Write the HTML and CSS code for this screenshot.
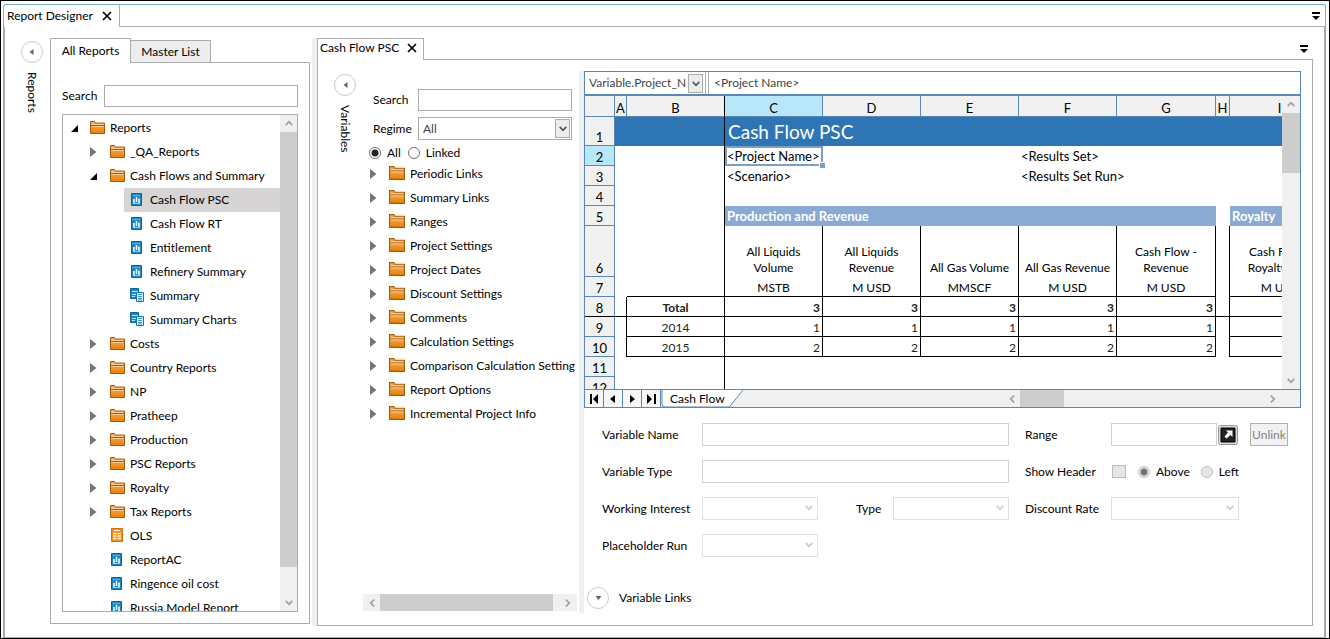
FILE: index.html
```html
<!DOCTYPE html>
<html lang="en">
<head>
<meta charset="utf-8">
<title>Report Designer</title>
<meta name="viewport" content="width=device-width, initial-scale=1">
<link rel="stylesheet" href="styles.css">
</head>
<body>
<svg class="defs" aria-hidden="true">
  <defs>
    <linearGradient id="gold" x1="0" y1="0" x2="0" y2="1"><stop offset="0" stop-color="#f9b764"/><stop offset="1" stop-color="#e87d08"/></linearGradient>
    <symbol id="folder" viewBox="0 0 15 13"><path d="M.5 12.500V.5h4l1 1.500h9v10.500z" fill="url(#gold)" stroke="#a65a08"/><path d="M1 4.500h13" stroke="#a65a08"/><path d="M1.500 3.500h12M1.500 5.500h12" stroke="#fcd096"/></symbol>
    <symbol id="report" viewBox="0 0 12 13"><path d="M.5.5h10v12H.5z" fill="#1a86c4" stroke="#0c6399"/><path d="M2 2.500h7" stroke="#62b4e0"/><path d="M3 6v4M5.500 4v5M8 5.500V10" stroke="#fff" stroke-width="1.500"/><path d="M2 10.500h7" stroke="#8fcdf0"/></symbol>
    <symbol id="multi" viewBox="0 0 14 14"><path d="M.5.5h8v10h-8z" fill="#1a86c4" stroke="#0c6399"/><path d="M2 3.500h6M2 6.500h4M2 8.500h3" stroke="#bfe3f7"/><path d="M6.500 4.500h7v9h-7z" fill="#e6f5fd" stroke="#0c74b4"/><path d="M8 6.500h4M8 8.500h4M8 10.500h4M8 12h4" stroke="#2a93d0"/></symbol>
    <symbol id="grid" viewBox="0 0 12 14"><path d="M.5.500h11v13H.5z" fill="#f08c18" stroke="#d86f04"/><path d="M3 2.500h6" stroke="#fff"/><path d="M2 5.500h3.500M6.500 5.500H10M2 8h3.500M6.500 8H10M2 10.500h3.500M6.500 10.500H10" stroke="#fff3dc" stroke-width="1.500"/></symbol>
    <symbol id="closed" viewBox="0 0 7 10"><path d="M0 0l6.500 5L0 10z" fill="#757575"/></symbol>
    <symbol id="open" viewBox="0 0 7 7"><path d="M7 0v7H0z" fill="#000"/></symbol>
    <symbol id="chev" viewBox="0 0 8 6"><path d="M.7.800L4 4.300 7.300.800" fill="none" stroke="currentColor" stroke-width="1.700"/></symbol>
    <symbol id="cross" viewBox="0 0 10 10"><path d="M1 1l8 8M9 1L1 9" stroke="#000" stroke-width="1.700"/></symbol>
    <symbol id="menu" viewBox="0 0 8 8"><path d="M0 0h8v2H0zM0 4h8L4 8z"/></symbol>
    <symbol id="tri" viewBox="0 0 5 6"><path d="M4.500 0v6L.5 3z" fill="#666"/></symbol>
  </defs>
</svg>
<div class="window">
  <header class="strip">
    <div class="tab"><span>Report Designer</span><button class="plain" aria-label="Close Report Designer"><svg class="i10"><use href="#cross"/></svg></button></div>
    <div class="rest"><button class="plain" aria-label="Window list"><svg class="i8"><use href="#menu"/></svg></button></div>
  </header>
  <div class="workspace">
    <aside class="rail">
      <button class="round" aria-label="Collapse reports"><svg class="tri"><use href="#tri"/></svg></button>
      <span class="vertical">Reports</span>
    </aside>
    <section class="reports">
      <nav class="tabs">
        <button class="page-tab active">All Reports</button><button class="page-tab">Master List</button><span class="tabline"></span>
      </nav>
      <div class="reports-body">
        <div class="search"><label for="rs">Search</label><input id="rs" class="box" type="text"></div>
        <div class="treebox">
          <ul class="tree">
            <li class="row"><svg class="open"><use href="#open"/></svg><svg class="folder"><use href="#folder"/></svg>Reports</li>
            <li class="row l1"><svg class="closed"><use href="#closed"/></svg><svg class="folder"><use href="#folder"/></svg>_QA_Reports</li>
            <li class="row l1"><svg class="open"><use href="#open"/></svg><svg class="folder"><use href="#folder"/></svg>Cash Flows and Summary</li>
            <li class="row leaf2 selected"><svg class="report"><use href="#report"/></svg>Cash Flow PSC</li>
            <li class="row leaf2"><svg class="report"><use href="#report"/></svg>Cash Flow RT</li>
            <li class="row leaf2"><svg class="report"><use href="#report"/></svg>Entitlement</li>
            <li class="row leaf2"><svg class="report"><use href="#report"/></svg>Refinery Summary</li>
            <li class="row leaf2"><svg class="multi"><use href="#multi"/></svg>Summary</li>
            <li class="row leaf2"><svg class="multi"><use href="#multi"/></svg>Summary Charts</li>
            <li class="row l1"><svg class="closed"><use href="#closed"/></svg><svg class="folder"><use href="#folder"/></svg>Costs</li>
            <li class="row l1"><svg class="closed"><use href="#closed"/></svg><svg class="folder"><use href="#folder"/></svg>Country Reports</li>
            <li class="row l1"><svg class="closed"><use href="#closed"/></svg><svg class="folder"><use href="#folder"/></svg>NP</li>
            <li class="row l1"><svg class="closed"><use href="#closed"/></svg><svg class="folder"><use href="#folder"/></svg>Pratheep</li>
            <li class="row l1"><svg class="closed"><use href="#closed"/></svg><svg class="folder"><use href="#folder"/></svg>Production</li>
            <li class="row l1"><svg class="closed"><use href="#closed"/></svg><svg class="folder"><use href="#folder"/></svg>PSC Reports</li>
            <li class="row l1"><svg class="closed"><use href="#closed"/></svg><svg class="folder"><use href="#folder"/></svg>Royalty</li>
            <li class="row l1"><svg class="closed"><use href="#closed"/></svg><svg class="folder"><use href="#folder"/></svg>Tax Reports</li>
            <li class="row leaf1"><svg class="gridicon"><use href="#grid"/></svg>OLS</li>
            <li class="row leaf1"><svg class="report"><use href="#report"/></svg>ReportAC</li>
            <li class="row leaf1"><svg class="report"><use href="#report"/></svg>Ringence oil cost</li>
            <li class="row leaf1"><svg class="report"><use href="#report"/></svg>Russia Model Report</li>
          </ul>
          <div class="vbar"><svg class="chev up"><use href="#chev"/></svg><div class="track"><div class="thumb tall"></div></div><svg class="chev"><use href="#chev"/></svg></div>
        </div>
      </div>
    </section>
    <div class="splitter"></div>
    <main class="document">
      <header class="strip doc">
        <div class="tab"><span>Cash Flow PSC</span><button class="plain" aria-label="Close Cash Flow PSC"><svg class="i10"><use href="#cross"/></svg></button></div>
        <div class="rest"><button class="plain" aria-label="Document list"><svg class="i8"><use href="#menu"/></svg></button></div>
      </header>
      <div class="doc-body">
        <aside class="rail inner">
          <button class="round" aria-label="Collapse variables"><svg class="tri"><use href="#tri"/></svg></button>
          <span class="vertical">Variables</span>
        </aside>
        <section class="variables">
          <div class="filter">
            <label for="vs">Search</label><input id="vs" class="box" type="text">
            <label for="rg">Regime</label>
            <span class="combo"><select id="rg" class="box"><option>All</option></select><span class="drop"><svg class="chev"><use href="#chev"/></svg></span></span>
          </div>
          <div class="radios">
            <input type="radio" name="scope" id="all" checked><label for="all">All</label>
            <input type="radio" name="scope" id="linked"><label for="linked">Linked</label>
          </div>
          <ul class="tree vars">
            <li class="row"><svg class="closed"><use href="#closed"/></svg><svg class="folder"><use href="#folder"/></svg>Periodic Links</li>
            <li class="row"><svg class="closed"><use href="#closed"/></svg><svg class="folder"><use href="#folder"/></svg>Summary Links</li>
            <li class="row"><svg class="closed"><use href="#closed"/></svg><svg class="folder"><use href="#folder"/></svg>Ranges</li>
            <li class="row"><svg class="closed"><use href="#closed"/></svg><svg class="folder"><use href="#folder"/></svg>Project Settings</li>
            <li class="row"><svg class="closed"><use href="#closed"/></svg><svg class="folder"><use href="#folder"/></svg>Project Dates</li>
            <li class="row"><svg class="closed"><use href="#closed"/></svg><svg class="folder"><use href="#folder"/></svg>Discount Settings</li>
            <li class="row"><svg class="closed"><use href="#closed"/></svg><svg class="folder"><use href="#folder"/></svg>Comments</li>
            <li class="row"><svg class="closed"><use href="#closed"/></svg><svg class="folder"><use href="#folder"/></svg>Calculation Settings</li>
            <li class="row"><svg class="closed"><use href="#closed"/></svg><svg class="folder"><use href="#folder"/></svg>Comparison Calculation Setting</li>
            <li class="row"><svg class="closed"><use href="#closed"/></svg><svg class="folder"><use href="#folder"/></svg>Report Options</li>
            <li class="row"><svg class="closed"><use href="#closed"/></svg><svg class="folder"><use href="#folder"/></svg>Incremental Project Info</li>
          </ul>
          <div class="hbar"><svg class="chev left"><use href="#chev"/></svg><div class="track"><div class="thumb"></div></div><svg class="chev right"><use href="#chev"/></svg></div>
        </section>
        <div class="splitter"></div>
        <section class="editor">
          <div class="sheet">
            <div class="formula">
              <span class="combo namebox"><select aria-label="Name box"><option>Variable.Project_N</option></select><span class="drop"><svg class="chev"><use href="#chev"/></svg></span></span>
              <input class="fx" type="text" aria-label="Formula" value="&lt;Project Name&gt;">
            </div>
            <div class="grid-area">
              <div class="cells">
                <table>
                  <colgroup><col class="c-head"><col class="c-a"><col class="c-n"><col class="c-n"><col class="c-n"><col class="c-n"><col class="c-n"><col class="c-g"><col class="c-h"><col class="c-i"></colgroup>
                  <thead><tr class="r20"><th></th><th>A</th><th class="frz">B</th><th class="on">C</th><th>D</th><th>E</th><th>F</th><th>G</th><th>H</th><th>I</th></tr></thead>
                  <tbody>
                    <tr class="r1 banner"><th>1</th><td></td><td class="frz"></td><td class="title" colspan="7">Cash Flow PSC</td></tr>
                    <tr class="r20"><th class="on">2</th><td></td><td class="frz"></td><td class="picked">&lt;Project Name&gt;<i class="sel"></i></td><td></td><td></td><td colspan="4">&lt;Results Set&gt;</td></tr>
                    <tr class="r20"><th>3</th><td></td><td class="frz"></td><td>&lt;Scenario&gt;</td><td></td><td></td><td colspan="4">&lt;Results Set Run&gt;</td></tr>
                    <tr class="r20"><th>4</th><td></td><td class="frz"></td><td colspan="7"></td></tr>
                    <tr class="r20"><th>5</th><td></td><td class="frz"></td><td class="group" colspan="5">Production and Revenue</td><td></td><td class="group">Royalty</td></tr>
                    <tr class="r6 names"><th>6</th><td></td><td class="frz"></td><td class="v">All Liquids<br>Volume</td><td class="v">All Liquids<br>Revenue</td><td class="v">All Gas Volume</td><td class="v">All Gas Revenue</td><td class="v">Cash Flow -<br>Revenue</td><td class="v"></td><td>Cash Flow -<br>Royalty Paid</td></tr>
                    <tr class="r20 names"><th>7</th><td></td><td class="frz u"></td><td class="v u">MSTB</td><td class="v u">M USD</td><td class="v u">MMSCF</td><td class="v u">M USD</td><td class="v u">M USD</td><td class="v"></td><td class="u">M USD</td></tr>
                    <tr class="r20 nums total cut"><th>8</th><td class="v u"></td><td class="frz u">Total</td><td class="v u">3</td><td class="v u">3</td><td class="v u">3</td><td class="v u">3</td><td class="v u">3</td><td class="v u"></td><td class="u"></td></tr>
                    <tr class="r20 nums"><th>9</th><td class="v"></td><td class="frz u">2014</td><td class="v u">1</td><td class="v u">1</td><td class="v u">1</td><td class="v u">1</td><td class="v u">1</td><td class="v"></td><td class="u"></td></tr>
                    <tr class="r20 nums"><th>10</th><td class="v"></td><td class="frz u">2015</td><td class="v u">2</td><td class="v u">2</td><td class="v u">2</td><td class="v u">2</td><td class="v u">2</td><td class="v"></td><td class="u"></td></tr>
                    <tr class="r20"><th>11</th><td></td><td class="frz"></td><td colspan="7"></td></tr>
                    <tr class="r20"><th>12</th><td></td><td class="frz"></td><td colspan="7"></td></tr>
                  </tbody>
                </table>
              </div>
              <div class="vbar wide"><svg class="chev up"><use href="#chev"/></svg><div class="track"><div class="thumb short"></div></div><svg class="chev"><use href="#chev"/></svg></div>
            </div>
            <div class="sheetbar">
              <button aria-label="First sheet"><svg viewBox="0 0 10 10"><path d="M1 0h2v10H1zM9 0v10L4 5z"/></svg></button>
              <button aria-label="Previous sheet"><svg viewBox="0 0 10 10"><path d="M7 1v8L2 5z"/></svg></button>
              <button aria-label="Next sheet"><svg viewBox="0 0 10 10"><path d="M3 1v8l5-4z"/></svg></button>
              <button aria-label="Last sheet"><svg viewBox="0 0 10 10"><path d="M8 0h2v10H8zM1 0v10l5-5z"/></svg></button>
              <button class="sheettab"><svg class="shape" viewBox="0 0 84 18"><path d="M1 0v14q0 3 3 3h63q2 0 3-2L82 0" fill="#fff" stroke="#5b87b5"/></svg><span>Cash Flow</span></button>
              <div class="hbar"><svg class="chev left"><use href="#chev"/></svg><div class="track"><div class="thumb small"></div></div><svg class="chev right"><use href="#chev"/></svg></div>
            </div>
          </div>
          <form class="form">
            <label for="vn">Variable Name</label><input id="vn" class="dim span3" type="text" disabled>
            <label class="far" for="ra">Range</label>
            <div class="range"><input id="ra" class="dim" type="text" disabled><button type="button" class="plain" aria-label="Pick range"><svg class="pick" viewBox="0 0 20 20"><rect x=".5" y=".5" width="19" height="19" rx="2" fill="#ddd" stroke="#999"/><path d="M3 3h14v14H3z" fill="#222" stroke="#000"/><path d="M8 5.500h6.500V12l-2-2-4 3.500-2-2 3.500-4z" fill="#fff"/></svg></button><button type="button" class="unlink" disabled>Unlink</button></div>
            <label for="vt">Variable Type</label><input id="vt" class="dim span3" type="text" disabled>
            <label class="far" for="sh">Show Header</label>
            <div class="header-opts"><input type="checkbox" id="sh" disabled><input type="radio" name="pos" id="ab" checked disabled><label for="ab">Above</label><input type="radio" name="pos" id="le" disabled><label for="le">Left</label></div>
            <label for="wi">Working Interest</label><span class="combo"><select id="wi" class="dim" disabled></select><svg class="chev"><use href="#chev"/></svg></span>
            <label class="type" for="ty">Type</label><span class="combo"><select id="ty" class="dim" disabled></select><svg class="chev"><use href="#chev"/></svg></span>
            <label class="far" for="dr">Discount Rate</label><span class="combo rate"><select id="dr" class="dim" disabled></select><svg class="chev"><use href="#chev"/></svg></span>
            <label for="pr">Placeholder Run</label><span class="combo"><select id="pr" class="dim" disabled></select><svg class="chev"><use href="#chev"/></svg></span>
          </form>
          <div class="links"><button class="round" id="vl" aria-label="Expand variable links"><svg class="tri down"><use href="#tri"/></svg></button><span>Variable Links</span></div>
        </section>
      </div>
    </main>
  </div>
</div>
</body>
</html>
```
FILE: styles.css
```css
* { box-sizing: border-box; }
body {
  margin: 0;
  height: 100vh;
  padding: 3px 3px 0 2px;
  border: 1px solid #000;
  background: #fff;
  color: #000;
  font: 12px/16px Lato, "Open Sans", sans-serif;
  overflow: hidden;
}
button, input, select { font: inherit; color: inherit; margin: 0; padding: 0; border-radius: 0; }
svg { display: block; flex: none; }
label, span { white-space: nowrap; }
.defs { position: absolute; width: 0; height: 0; }
.i10 { width: 10px; height: 10px; }
.i8 { width: 8px; height: 8px; }
.plain { border: 0; background: none; }

.window {
  height: 100%;
  display: flex;
  flex-direction: column;
  border: 1px solid #7fb0c8;
  border-bottom-color: #aaa;
  border-radius: 3px 3px 0 0;
}
.strip { display: flex; flex: none; height: 22px; }
.tab {
  display: flex;
  align-items: center;
  gap: 9px;
  padding: 0 7px 1px 3px;
  border: 1px solid #acacac;
  border-width: 0 1px 0 0;
}
.rest {
  flex: 1;
  display: flex;
  justify-content: flex-end;
  align-items: center;
  padding-right: 5px;
  border-bottom: 1px solid #acacac;
}
.workspace { flex: 1; min-height: 0; display: flex; padding: 11px 11px 11px 0; border-right: 1px solid #acacac; border-left: 1px solid #acacac; }

.rail { width: 45px; flex: none; display: flex; flex-direction: column; align-items: center; gap: 9px; padding: 3px 0 0 8px; }
.rail.inner { padding: 13px 0 0 9px; }
.round {
  width: 22px;
  height: 22px;
  flex: none;
  display: flex;
  align-items: center;
  justify-content: center;
  border: 1px solid #ccc;
  border-radius: 50%;
  background: #fff;
}
.tri { width: 5px; height: 6px; }
.tri.down { transform: rotate(-90deg); }
.vertical { writing-mode: vertical-rl; }

.reports { width: 260px; flex: none; display: flex; flex-direction: column; margin-bottom: 2px; }
.tabs { display: flex; align-items: flex-end; height: 25px; }
.page-tab { width: 80px; height: 23px; border: 1px solid #acacac; border-left: 0; background: #ededed; }
.page-tab.active { width: 81px; height: 25px; border-left: 1px solid #acacac; border-bottom: 0; background: #fff; }
.tabline { flex: 1; border-bottom: 1px solid #acacac; }
.reports-body { flex: 1; min-height: 0; display: flex; flex-direction: column; gap: 7px; padding: 22px 11px 11px; border: 1px solid #acacac; border-top: 0; }
.search { display: flex; align-items: center; gap: 7px; }
.search label { flex: none; width: 35px; }
.search .box { flex: 1; }
.box { width: 100%; min-width: 0; height: 22px; border: 1px solid #acacac; background: #fff; }
.treebox { flex: 1; min-height: 0; display: flex; border: 1px solid #acacac; }
.tree { flex: 1; min-width: 0; margin: 0; padding: 0; list-style: none; overflow: hidden; }
.row { display: flex; align-items: center; height: 24px; padding-left: 8px; white-space: nowrap; }
.l1 { padding-left: 27px; }
.leaf1 { padding-left: 47px; }
.treebox .tree { padding-top: 1px; }
.selected { background: linear-gradient(90deg, #fff 61px, #d6d4d5 61px); }
.leaf2 { padding-left: 67px; }
.open { width: 7px; height: 7px; margin-right: 12px; }
.l1 .closed, .l1 .open { margin-right: 13px; }
.closed { width: 7px; height: 10px; margin-right: 13px; }
.folder { width: 15px; height: 13px; margin: 0 5px 2px 0; }
.report { width: 12px; height: 13px; margin: 0 7px 2px 1px; }
.multi { width: 14px; height: 14px; margin: 0 6px 2px 0; }
.gridicon { width: 12px; height: 14px; margin: 0 7px 2px 1px; }

.vbar, .hbar { display: flex; flex: none; align-items: center; background: #f0f0f0; color: #a0a0a0; }
.vbar { width: 17px; flex-direction: column; padding: 5px 0; }
.vbar.wide { width: 18px; }
.track { flex: 1; display: flex; }
.vbar .track { flex-direction: column; width: 100%; margin: 6px 0 5px; }
.thumb { background: #cdcdcd; }
.tall { height: 94%; }
.short { height: 60px; }
.hbar { height: 17px; padding: 0 5px; }
.hbar .track { align-self: stretch; margin: 0 4px; }
.hbar .thumb { width: 96%; }
.hbar .small { width: 44px; }
.chev { width: 8px; height: 6px; }
.up { transform: rotate(180deg); }
.left { transform: rotate(90deg); }
.right { transform: rotate(-90deg); }
.splitter { width: 5px; flex: none; background: #f0f0f0; }
.reports + .splitter { margin-left: 2px; }

.document { flex: 1; min-width: 0; display: flex; flex-direction: column; }
.doc .tab { gap: 8px; border-width: 1px 1px 0; padding: 0 6px 3px 2px; }
.doc-body { flex: 1; min-height: 0; display: flex; padding: 11px 11px 12px 0; border: 1px solid #acacac; border-top: 0; }
.doc-body .rail { padding-top: 3px; }
.variables { width: 214px; flex: none; display: flex; flex-direction: column; padding-bottom: 2px; }
.doc-body > .splitter { margin-left: 2px; }
.filter { display: grid; grid-template-columns: 45px 1fr; gap: 6px 0; align-items: center; padding: 18px 5px 0 10px; }
.combo { position: relative; display: block; min-width: 0; }
.combo select { display: block; width: 100%; height: 23px; appearance: none; background: #fff; }
.combo > .chev { position: absolute; right: 5px; top: 8px; color: #ccc; }
.combo .box { padding-left: 4px; color: #444; }
.drop {
  position: absolute;
  right: 2px;
  top: 2px;
  width: 15px;
  height: 19px;
  display: flex;
  align-items: center;
  justify-content: center;
  border: 1px solid #acacac;
  background: #ececec;
  color: #555;
  pointer-events: none;
}
.radios { display: flex; align-items: center; height: 22px; padding: 3px 0 0 6px; }
input[type="radio"] { appearance: none; flex: none; width: 12px; height: 12px; margin-right: 6px; border: 1px solid #707070; border-radius: 50%; background: #fff; }
input[type="radio"]:checked { background: radial-gradient(circle, #222 3px, #fff 4px); }
input[type="radio"]:disabled { border-color: #c0c0c0; background: #e6e6e6; }
input[type="radio"]:checked:disabled { background: radial-gradient(circle, #707070 3px, #e6e6e6 4px); }
.radios label + input { margin-left: 7px; }
.vars .row { padding-left: 7px; }
.vars .closed { margin-right: 12px; }
.vars .folder { width: 16px; height: 14px; }

.editor { flex: 1; min-width: 0; display: flex; flex-direction: column; }
.sheet { flex: 1; min-height: 0; display: flex; flex-direction: column; border: 1px solid #5b87b5; }
.formula { display: flex; flex: none; height: 24px; border-bottom: 2px solid #5b87b5; color: #444; }
.namebox { width: 121px; border-right: 1px solid #acacac; }
.namebox select { height: 22px; padding-left: 4px; border: 0; }
.fx { flex: 1; min-width: 0; margin-left: 2px; padding-left: 5px; border: 0; border-left: 1px solid #acacac; background: #fff; }
.grid-area { flex: 1; min-height: 0; display: flex; }
.cells { flex: 1; min-width: 0; overflow: hidden; font: 13px/16px Lato, sans-serif; }
table { table-layout: fixed; width: 745px; border-collapse: separate; border-spacing: 0; }
.c-head { width: 30px; }
.c-a { width: 12px; }
.c-n { width: 98px; }
.c-g { width: 99px; }
.c-h { width: 14px; }
.c-i { width: 100px; }
th, td { padding: 0 2px; vertical-align: bottom; white-space: nowrap; }
tbody td { padding-bottom: 2px; }
th { padding: 0; border: 1px solid #5b87b5; border-width: 0 1px 1px 0; background: #f1f1f1; font-weight: 400; }
th.on { background: #b8e7fa; }
.r20 { height: 20px; }
thead .r20 { height: 21px; }
thead th { vertical-align: bottom; }
.r1 { height: 29px; }
.r6 { height: 51px; }
th.frz, td.frz { border-right: 1px solid #000; }
.banner td { background: #2e75b6; }
.banner .title { padding: 0 3px 2px; color: #fff; font-size: 19px; line-height: 24px; }
.picked { position: relative; }
.sel { position: absolute; inset: 0; border: 2px solid #7f9fc0; }
.sel::after { content: ""; position: absolute; right: -4px; bottom: -4px; width: 5px; height: 5px; background: #7f9fc0; border: 1px solid #fff; border-width: 1px 0 0 1px; }
.group { background: #8aa9d3; color: #fff; font-weight: 700; }
.v { border-right: 1px solid #000; }
.u, .cut th { border-bottom: 1px solid #000; }
.names td { padding-bottom: 1px; text-align: center; font-size: 12px; }
.names .u, .nums td { padding-bottom: 0; }
.nums td { text-align: right; font-size: 12px; color: #222; }
.nums .frz { text-align: center; }
.total td { font-weight: 700; }
.sheetbar { display: flex; flex: none; height: 18px; border-top: 1px solid #5b87b5; background: #f1f1f1; }
.sheetbar button { width: 19px; padding: 0 4px; border: 0; border-right: 1px solid #5b87b5; background: #f7f7f7; }
.sheetbar button svg { width: 10px; height: 10px; }
.sheetbar .sheettab { position: relative; width: 84px; padding: 0; border: 0; background: none; text-align: left; }
.sheetbar .sheettab .shape { position: absolute; inset: 0; width: 84px; height: 18px; }
.sheettab span { position: relative; padding-left: 9px; }
.sheetbar .hbar { width: 279px; margin: 0 18px 0 auto; }

.form { flex: none; display: grid; grid-template-columns: 100px 116px 75px minmax(116px, 1fr) 102px 190px; grid-auto-rows: 23px; row-gap: 14px; align-items: center; padding: 15px 0 0 18px; }
.span3 { grid-column: span 3; }
.far { padding-left: 16px; }
.type { padding-left: 38px; }
.dim { height: 23px; min-width: 0; border: 1px solid #d2d2d2; background: #fff; }
.rate { width: 128px; }
.range { display: flex; align-items: center; }
.range .dim { width: 106px; margin-right: 1px; }
.pick { width: 20px; height: 20px; }
.unlink { width: 38px; height: 23px; margin-left: 12px; border: 1px solid #b0b0b0; background: #f2f2f2; color: #838383; }
.header-opts { display: flex; align-items: center; }
input[type="checkbox"] { appearance: none; width: 14px; height: 13px; margin: 0 12px 0 1px; border: 1px solid #bcbcbc; background: #e6e6e6; }
.header-opts label { margin-right: 11px; }
.links { display: flex; align-items: center; gap: 10px; flex: none; margin-top: 30px; padding: 0 0 4px 3px; }
```
